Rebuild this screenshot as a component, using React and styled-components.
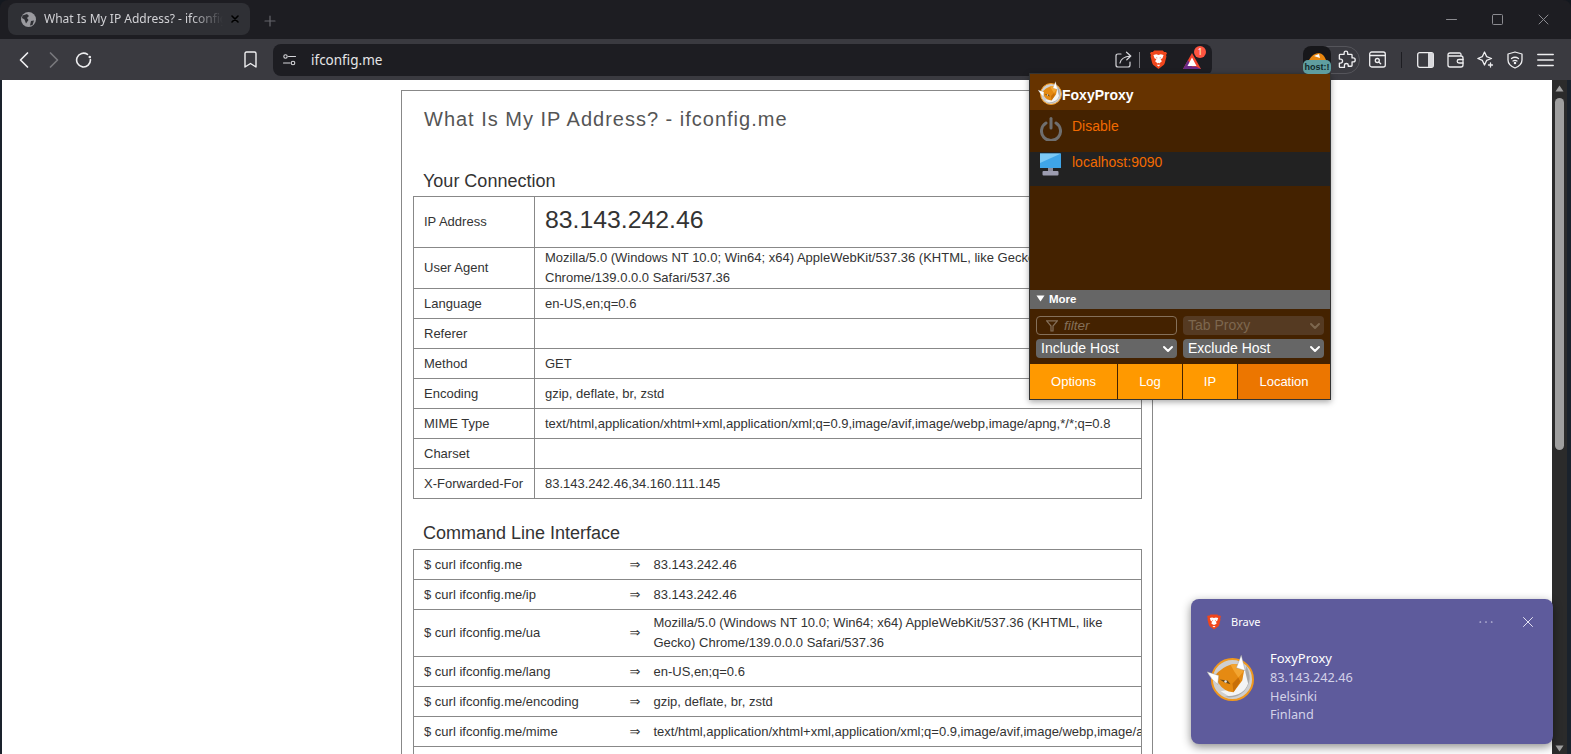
import React from "react";
import styled, { createGlobalStyle } from "styled-components";

const Global = createGlobalStyle`
  html, body { margin: 0; padding: 0; background: #14181f; overflow: hidden; }
  * { box-sizing: border-box; }
`;

const UI = `"Noto Sans", "Open Sans", sans-serif`;
const WEB = `"Liberation Sans", Arial, sans-serif`;

const Win = styled.div`
  position: relative;
  width: 1571px;
  height: 754px;
  overflow: hidden;
  display: flex;
  flex-direction: column;
  background: #14181f;
`;

/* ---------- tab strip ---------- */
const TabStrip = styled.div`
  height: 39px;
  flex: none;
  display: flex;
  align-items: flex-start;
  padding: 3px 0 0 8px;
  background: #1d1d22;
  border-radius: 8px 8px 0 0;
`;
const Tab = styled.div`
  width: 242px;
  height: 32px;
  display: flex;
  align-items: center;
  padding: 0 11px 0 13px;
  gap: 8px;
  background: #2f3035;
  border-radius: 8px;
`;
const TabTitle = styled.span`
  flex: 1;
  min-width: 0;
  font: 12px/16px ${UI};
  color: #d2d2d6;
  white-space: nowrap;
  overflow: hidden;
  -webkit-mask-image: linear-gradient(to right, #000 82%, transparent);
  mask-image: linear-gradient(to right, #000 82%, transparent);
`;
const NewTab = styled.div`
  width: 14px;
  height: 14px;
  margin: 12px 0 0 14px;
  color: #65656b;
  display: flex;
`;
const WinControls = styled.div`
  margin-left: auto;
  height: 32px;
  display: flex;
  align-items: center;
  color: #8b8b90;
  padding-right: 22px;
  gap: 35px;
`;

/* ---------- toolbar ---------- */
const Toolbar = styled.div`
  height: 41px;
  flex: none;
  display: flex;
  align-items: center;
  padding-left: 9px;
  background: #3a3a40;
`;
const NavBtn = styled.div`
  width: 30px;
  height: 30px;
  flex: none;
  display: flex;
  align-items: center;
  justify-content: center;
  color: ${(p) => (p.$dim ? "#77777c" : "#eeeef0")};
  margin-left: ${(p) => p.$ml || 0}px;
`;
const UrlBar = styled.div`
  width: 939px;
  height: 32px;
  margin-left: 8px;
  flex: none;
  display: flex;
  align-items: center;
  background: #1d1d22;
  border-radius: 8px;
  padding: 0 0 0 10px;
  color: #d6d6da;
`;
const UrlText = styled.span`
  font: 13.5px/18px ${UI};
  color: #e6e6e8;
  margin-left: 15px;
  flex: 1;
`;
const UrlDivider = styled.span`
  width: 1px;
  height: 16px;
  background: #77777c;
  margin: 0 10px 0 7px;
`;
const BatWrap = styled.span`
  position: relative;
  width: 18px;
  height: 16px;
  display: flex;
  margin: 3px 11px 0 16px;
`;
const CountBadge = styled.span`
  position: absolute;
  right: -5px;
  top: -7px;
  width: 12px;
  height: 12px;
  border-radius: 50%;
  background: #ff5540;
  color: #fff;
  font: 8px/12px ${UI};
  text-align: center;
`;
const ExtPill = styled.div`
  position: relative;
  width: 57px;
  height: 28px;
  margin-left: 91px;
  flex: none;
  border: 1px solid #55555b;
  border-radius: 14px;
  display: flex;
  align-items: center;
  justify-content: flex-end;
  padding-right: 3px;
  color: #eeeef0;
`;
const ExtAvatar = styled.div`
  position: absolute;
  left: -1px;
  top: -1px;
  width: 28px;
  height: 28px;
  background: #17171a;
  border-radius: 8px;
  overflow: hidden;
  display: flex;
  justify-content: center;
  padding-top: 6px;
`;
const HostBadge = styled.span`
  position: absolute;
  left: -1px;
  top: 13px;
  width: 28px;
  height: 14px;
  background: #5f9ea0;
  color: #10282a;
  border-radius: 5px;
  font: 9px/14px ${WEB};
  font-weight: 700;
  text-align: center;
  z-index: 2;
`;
const ToolIcons = styled.div`
  display: flex;
  align-items: center;
  margin-left: 2px;
  color: #eeeef0;
`;
const ToolSlot = styled.div`
  width: 30px;
  height: 30px;
  display: flex;
  align-items: center;
  justify-content: center;
`;
const ToolDivider = styled.span`
  width: 1px;
  height: 16px;
  background: #1d1d22;
  margin: 0 8px 0 9px;
`;

/* ---------- page ---------- */
const PageRow = styled.div`
  flex: 1;
  min-height: 0;
  display: flex;
  background: #1a222c;
  padding-left: 2px;
`;
const Page = styled.main`
  flex: 1;
  min-width: 0;
  background: #fff;
  overflow: hidden;
  padding: 10px 0 0 399px;
  font: 13px/20px ${WEB};
  color: #333;
`;
const Sheet = styled.div`
  width: 752px;
  height: 800px;
  border: 1px solid #888;
  padding: 14px 11px 0;
`;
const Title = styled.h1`
  margin: 0 0 36px 11px;
  font: 400 20px/28px ${WEB};
  letter-spacing: 1px;
  color: #555;
`;
const Heading = styled.h2`
  margin: ${(p) => p.$top}px 0 ${(p) => p.$bottom}px 10px;
  font: 400 18px/24px ${WEB};
  color: #333;
`;
const Table = styled.table`
  width: 728px;
  table-layout: fixed;
  border-collapse: collapse;
  border: 1px solid #888;
`;
const Col = styled.col`
  width: ${(p) => p.$w}px;
`;
const Row = styled.tr`
  height: ${(p) => p.$h || 30}px;
`;
const Cell = styled.td`
  padding: 0 10px;
  border-top: 1px solid #888;
  border-bottom: 1px solid #888;
  border-left: ${(p) => (p.$grid ? "1px solid #888" : "0")};
  border-right: ${(p) => (p.$grid ? "1px solid #888" : "0")};
  white-space: ${(p) => (p.$nowrap ? "nowrap" : "normal")};
  overflow: hidden;
`;
const CliArrow = styled.td`
  padding: 0 0 0 11px;
  border-top: 1px solid #888;
  border-bottom: 1px solid #888;
  font-family: "DejaVu Sans", sans-serif;
  font-size: 13px;
`;
const BigIp = styled.span`
  font-size: 24.8px;
  line-height: 30px;
  position: relative;
  top: -2px;
`;

/* ---------- scrollbar ---------- */
const ScrollBar = styled.div`
  width: 15px;
  flex: none;
  margin-right: 4px;
  background: #2b2b2b;
  display: flex;
  flex-direction: column;
  align-items: center;
  padding-top: 5px;
  color: #9f9f9f;
`;
const ScrollThumb = styled.div`
  width: 9px;
  height: 352px;
  margin-top: 6px;
  background: #9f9f9f;
  border-radius: 5px;
`;
const ScrollArrowBottom = styled.div`
  margin-top: auto;
  margin-bottom: 2px;
  display: flex;
`;

/* ---------- FoxyProxy popup ---------- */
const Popup = styled.section`
  position: absolute;
  left: 1029px;
  top: 73px;
  width: 302px;
  height: 327px;
  background: #442200;
  border: 1px solid #333;
  box-shadow: 0 2px 6px rgba(0, 0, 0, 0.35);
  display: flex;
  flex-direction: column;
  font: 14px/18px ${WEB};
`;
const PopupHeader = styled.header`
  height: 36px;
  flex: none;
  background: #663300;
  display: flex;
  align-items: flex-start;
  padding: 7px 0 0 8px;
  gap: 0;
  color: #fff;
  font: bold 14px/18px ${WEB};
`;
const HeaderText = styled.span`
  margin-top: 5px;
`;
const ProxyRow = styled.div`
  height: ${(p) => p.$h}px;
  flex: none;
  display: flex;
  align-items: flex-start;
  padding: ${(p) => p.$pad}px 0 0 10px;
  gap: 10px;
  background: ${(p) => (p.$selected ? "#222" : "transparent")};
  color: #f26a00;
`;
const ProxyIcon = styled.span`
  width: 22px;
  height: 24px;
  display: flex;
  flex: none;
`;
const ProxyLabel = styled.span`
  margin-top: ${(p) => p.$mt || 0}px;
`;
const Spacer = styled.div`
  flex: 1;
`;
const MoreBar = styled.div`
  height: 19px;
  flex: none;
  background: #666;
  color: #fff;
  display: flex;
  align-items: center;
  gap: 4px;
  padding: 0 0 2px 6px;
  font: bold 11.5px/14px ${WEB};
`;
const Controls = styled.div`
  display: grid;
  grid-template-columns: 141px 141px;
  column-gap: 6px;
  row-gap: 4px;
  padding: 7px 6px 6px;
`;
const FilterBox = styled.div`
  height: 19px;
  border: 1px solid #85705a;
  border-radius: 4px;
  display: flex;
  align-items: center;
  padding-left: 9px;
  gap: 6px;
  color: #85705a;
  font: italic 13.5px/17px ${WEB};
`;
const Dropdown = styled.div`
  height: 19px;
  border-radius: 4px;
  background: ${(p) => (p.$disabled ? "#553a22" : "#666")};
  color: ${(p) => (p.$disabled ? "#7d674f" : "#fff")};
  display: flex;
  align-items: center;
  justify-content: space-between;
  padding: 0 3px 0 5px;
  font: 14px/17px ${WEB};
`;
const ButtonRow = styled.div`
  height: 35px;
  flex: none;
  display: grid;
  grid-template-columns: 87px 64px 54px 1fr;
  column-gap: 1px;
  margin-top: auto;
`;
const ActionButton = styled.div`
  background: ${(p) => (p.$dark ? "#ec7600" : "#ff9900")};
  color: #fff;
  font: 13px/35px ${WEB};
  text-align: center;
`;

/* ---------- notification ---------- */
const Toast = styled.aside`
  position: absolute;
  left: 1191px;
  top: 599px;
  width: 362px;
  height: 145px;
  border-radius: 8px;
  background: #5e5b9c;
  box-shadow: 0 3px 10px rgba(0, 0, 0, 0.45);
  padding: 15px 20px 0 16px;
  font-family: ${UI};
`;
const ToastHead = styled.div`
  display: flex;
  align-items: center;
  height: 16px;
  color: #fff;
  font-size: 11px;
  line-height: 16px;
  gap: 10px;
`;
const ToastAction = styled.span`
  display: flex;
  color: #e4e3f2;
  margin-left: ${(p) => (p.$auto ? "auto" : "20px")};
`;
const ToastBody = styled.div`
  display: flex;
  margin-top: 23px;
  gap: 16px;
`;
const ToastIcon = styled.div`
  width: 47px;
  height: 47px;
  flex: none;
  display: flex;
  margin-top: 1px;
`;
const ToastLines = styled.div`
  margin-top: -4px;
  font-size: 12.7px;
  line-height: 18.8px;
  color: #d3d2e8;
`;
const ToastTitle = styled.div`
  color: #fff;
  font-size: 13px;
`;

/* ---------- drawings ---------- */
const Svg = ({ w, h = w, vb, children, sw = 1.5 }) => (
  <svg
    width={w}
    height={h}
    viewBox={vb || `0 0 ${w} ${h}`}
    fill="none"
    stroke="currentColor"
    strokeWidth={sw}
    strokeLinecap="round"
    strokeLinejoin="round"
  >
    {children}
  </svg>
);

const Fox = ({ size }) => (
  <svg width={size} height={size} viewBox="0 0 48 48">
    <circle cx="26" cy="26" r="21" fill="#cfcfcf" stroke="#f0981e" strokeWidth="2" />
    <path d="M40 12 Q48 26 38 38 Q30 46 18 44 Q34 40 38 28Z" fill="#a9a9a9" />
    <path d="M38 14 L42 30 Q38 42 22 43 L14 38 Q30 36 36 26Z" fill="#f4f4f4" />
    <path d="M8 22 Q16 13 24 11 Q30 9 35 12 L38 16 L36 27 L27 39 Q17 38 12 30Z" fill="#e58a12" />
    <path d="M24 11 Q30 9 35 12 L37 18 L32 24 L28 18Z" fill="#f3a531" />
    <path d="M13 26 L21 27 L24 31 L18 29Z" fill="#6a4a1a" />
    <path d="M27 39 L34 28 L32 24 L26 30Z" fill="#c86f08" />
    <path d="M30 14 L35 1 L39 17Z" fill="#fff" stroke="#888" strokeWidth=".4" />
    <path d="M0 18 L12 22 L11 31 Q5 27 0 18Z" fill="#fff" stroke="#888" strokeWidth=".4" />
    <circle cx="19" cy="28" r="1.3" fill="#e8e8e8" />
  </svg>
);

const Lion = ({ size }) => (
  <svg width={size} height={size * 1.14} viewBox="0 0 18 20.5">
    <path
      d="M4.5 0.5 H13.5 L15 2.2 L16.8 2 L18 3.4 L17 5.2 L17.4 7 L15.6 14 Q15 15.8 13.4 16.8 L9 20 L4.6 16.8 Q3 15.8 2.4 14 L0.6 7 L1 5.2 L0 3.4 L1.2 2 L3 2.2Z"
      fill="#f0461c"
    />
    <path
      d="M3.6 5.2 L6.6 4.4 L9 5.2 L11.4 4.4 L14.4 5.2 L13.2 8.8 L11.2 9.8 L12.6 11.8 L9.8 14.2 L9 13.6 L8.2 14.2 L5.4 11.8 L6.8 9.8 L4.8 8.8Z"
      fill="#fff"
    />
    <path d="M7 15.5 H11 L9 17.4Z" fill="#fff" />
    <path d="M6.5 7.5 L8 8.4 L7.2 9Z M11.5 7.5 L10 8.4 L10.8 9Z" fill="#f0461c" />
  </svg>
);

const Bat = () => (
  <svg width="18" height="16" viewBox="0 0 18 16">
    <path d="M9 0 L18 16 H0Z" fill="#f4442e" />
    <path d="M0 16 L5 7 L9 13.5 L13 13.5 L18 16Z" fill="#6a2a86" />
    <path d="M9 4.5 L13.5 13 H4.5Z" fill="#fff" />
  </svg>
);

const Globe = () => (
  <svg width="15" height="15" viewBox="0 0 15 15">
    <circle cx="7.5" cy="7.5" r="7.5" fill="#9a9a9f" />
    <path d="M1.5 3.5 L6 2 L8 4 L6 6 L7.5 8 L5 11.5 L3.5 7.5 L1 6Z M10 9 L13 8.5 L11.5 13 L9 13.5Z" fill="#2f3035" />
  </svg>
);

const Triangle = ({ down }) => (
  <svg width="9" height="7" viewBox="0 0 9 7">
    <path d={down ? "M0.5 0.5 H8.5 L4.5 6.5Z" : "M0.5 6.5 H8.5 L4.5 0.5Z"} fill="currentColor" />
  </svg>
);

const Chevron = () => (
  <Svg w={12} h={8} sw={2}>
    <path d="M2 2 L6 6 L10 2" />
  </Svg>
);

function CliRow({ cmd, val, h, nowrap }) {
  return (
    <Row $h={h}>
      <Cell>{cmd}</Cell>
      <CliArrow>⇒</CliArrow>
      <Cell $nowrap={nowrap}>{val}</Cell>
    </Row>
  );
}

const App = () => (
  <Win>
    <Global />
    <TabStrip>
      <Tab>
        <Globe />
        <TabTitle>What Is My IP Address? - ifconfig.me</TabTitle>
        <Svg w={8} sw={1.6}>
          <path d="M1 1 L7 7 M7 1 L1 7" />
        </Svg>
      </Tab>
      <NewTab>
        <Svg w={12} sw={1.2}>
          <path d="M6 1 V11 M1 6 H11" />
        </Svg>
      </NewTab>
      <WinControls>
        <Svg w={11} sw={1}>
          <path d="M0.5 5.5 H10.5" />
        </Svg>
        <Svg w={11} sw={1}>
          <rect x="0.5" y="0.5" width="10" height="10" rx="1" />
        </Svg>
        <Svg w={11} sw={1}>
          <path d="M1 1 L10 10 M10 1 L1 10" />
        </Svg>
      </WinControls>
    </TabStrip>

    <Toolbar>
      <NavBtn>
        <Svg w={12} h={18} sw={1.7}>
          <path d="M9.5 2 L2.5 9 L9.5 16" />
        </Svg>
      </NavBtn>
      <NavBtn $dim>
        <Svg w={12} h={18} sw={1.7}>
          <path d="M2.5 2 L9.5 9 L2.5 16" />
        </Svg>
      </NavBtn>
      <NavBtn>
        <Svg w={18} sw={1.6}>
          <path d="M15.4 8.5 A6.9 6.9 0 1 1 12.5 3.4" />
          <circle cx="14.8" cy="6" r="1.3" fill="currentColor" stroke="none" />
        </Svg>
      </NavBtn>
      <NavBtn $ml={136}>
        <Svg w={13} h={17} sw={1.4}>
          <path d="M1 2.5 Q1 1 2.5 1 H10.5 Q12 1 12 2.5 V16 L6.5 12.5 L1 16Z" />
        </Svg>
      </NavBtn>
      <UrlBar>
        <Svg w={13} h={12} sw={1.1}>
          <circle cx="2.5" cy="2.5" r="1.7" />
          <path d="M5.5 2.5 H12.5 M0.5 9 H7" />
          <circle cx="10" cy="9" r="1.8" />
        </Svg>
        <UrlText>ifconfig.me</UrlText>
        <Svg w={17} sw={1.2}>
          <path d="M6 3 H3 Q1 3 1 5 V14 Q1 16 3 16 H13 Q15 16 15 14 V11" />
          <path d="M5 12 Q6 6 15.5 5 M11.5 1.2 L15.8 5 L11.8 8.8" />
        </Svg>
        <UrlDivider />
        <Lion size={17} />
        <BatWrap>
          <Bat />
          <CountBadge>1</CountBadge>
        </BatWrap>
      </UrlBar>
      <ExtPill>
        <ExtAvatar>
          <svg width="20" height="8" viewBox="0 0 20 8">
            <path d="M2 8 Q6 1 12 1 Q17 2 19 8Z" fill="#e8860f" />
            <path d="M7 4 L12 2 L13 6Z" fill="#fff" />
          </svg>
        </ExtAvatar>
        <HostBadge>host:!</HostBadge>
        <Svg w={19} vb="0 0 24 24" sw={1.7}>
          <path d="M9 3.5 Q9 1.5 11.3 1.5 Q13.5 1.5 13.5 3.5 V5.5 H18 Q19 5.5 19 6.5 V10 H20.5 Q23 10 23 12.5 Q23 15 20.5 15 H19 V19.5 Q19 20.5 18 20.5 H14.2 V19 Q14.2 17 11.8 17 Q9.4 17 9.4 19 V22 H4 Q3 22 3 21 V16.5 H4.5 Q7 16.5 7 14 Q7 11.5 4.5 11.5 H3 V6.5 Q3 5.5 4 5.5 H9Z" />
        </Svg>
      </ExtPill>
      <ToolIcons>
        <ToolSlot>
          <Svg w={17} sw={1.3}>
            <rect x="0.7" y="1" width="15.6" height="15" rx="2" />
            <path d="M1 4.5 H16" />
            <circle cx="8.3" cy="9.5" r="2" />
            <path d="M10 11.2 L11.7 12.8" />
          </Svg>
        </ToolSlot>
        <ToolDivider />
        <ToolSlot>
          <svg width="17" height="16" viewBox="0 0 17 16">
            <rect x="0.7" y="0.7" width="15.6" height="14.6" rx="2" fill="none" stroke="currentColor" strokeWidth="1.3" />
            <path d="M11 1 H15 Q16 1 16 2 V14 Q16 15 15 15 H11Z" fill="#d8d8dc" />
          </svg>
        </ToolSlot>
        <ToolSlot>
          <Svg w={17} h={16} sw={1.3}>
            <path d="M14 4 V2.5 Q14 1 12.5 1 H3 Q1 1 1 3 V13 Q1 15 3 15 H14 Q16 15 16 13 V6 Q16 4 14 4 H2" />
            <path d="M16 7.5 H12 Q10.2 7.5 10.2 9.3 Q10.2 11 12 11 H16" />
          </Svg>
        </ToolSlot>
        <ToolSlot>
          <Svg w={17} sw={1.3}>
            <path d="M7.5 1 L9.6 5.6 L14.5 7.5 L9.6 9.4 L7.5 14 L5.4 9.4 L0.8 7.5 L5.4 5.6Z" />
            <path d="M13.5 12 V16 M11.5 14 H15.5" />
          </Svg>
        </ToolSlot>
        <ToolSlot>
          <Svg w={16} h={18} sw={1.3}>
            <path d="M8 1 L15 3 V9 Q15 14 8 17 Q1 14 1 9 V3Z" />
            <path d="M4.5 7.5 Q8 5 11.5 7.5 M6 10 Q8 8.6 10 10" />
            <circle cx="8" cy="12" r=".6" fill="currentColor" />
          </Svg>
        </ToolSlot>
        <ToolSlot>
          <Svg w={17} h={14} sw={1.5}>
            <path d="M0.8 1.5 H16.2 M0.8 7 H16.2 M0.8 12.5 H16.2" />
          </Svg>
        </ToolSlot>
      </ToolIcons>
    </Toolbar>

    <PageRow>
      <Page>
        <Sheet>
          <Title>What Is My IP Address? - ifconfig.me</Title>
          <Heading $top={0} $bottom={3}>Your Connection</Heading>
          <Table>
            <colgroup>
              <Col $w={121} />
              <Col $w={607} />
            </colgroup>
            <tbody>
              <Row $h={51}>
                <Cell $grid>IP Address</Cell>
                <Cell $grid><BigIp>83.143.242.46</BigIp></Cell>
              </Row>
              <Row $h={41}>
                <Cell $grid>User Agent</Cell>
                <Cell $grid>Mozilla/5.0 (Windows NT 10.0; Win64; x64) AppleWebKit/537.36 (KHTML, like Gecko) Chrome/139.0.0.0 Safari/537.36</Cell>
              </Row>
              <Row>
                <Cell $grid>Language</Cell>
                <Cell $grid>en-US,en;q=0.6</Cell>
              </Row>
              <Row>
                <Cell $grid>Referer</Cell>
                <Cell $grid />
              </Row>
              <Row>
                <Cell $grid>Method</Cell>
                <Cell $grid>GET</Cell>
              </Row>
              <Row>
                <Cell $grid>Encoding</Cell>
                <Cell $grid>gzip, deflate, br, zstd</Cell>
              </Row>
              <Row>
                <Cell $grid>MIME Type</Cell>
                <Cell $grid>text/html,application/xhtml+xml,application/xml;q=0.9,image/avif,image/webp,image/apng,*/*;q=0.8</Cell>
              </Row>
              <Row>
                <Cell $grid>Charset</Cell>
                <Cell $grid />
              </Row>
              <Row>
                <Cell $grid $nowrap>X-Forwarded-For</Cell>
                <Cell $grid>83.143.242.46,34.160.111.145</Cell>
              </Row>
            </tbody>
          </Table>

          <Heading $top={22} $bottom={4}>Command Line Interface</Heading>
          <Table>
            <colgroup>
              <Col $w={205} />
              <Col $w={25} />
              <Col $w={498} />
            </colgroup>
            <tbody>
              <CliRow cmd="$ curl ifconfig.me" val="83.143.242.46" />
              <CliRow cmd="$ curl ifconfig.me/ip" val="83.143.242.46" />
              <CliRow
                h={47}
                cmd="$ curl ifconfig.me/ua"
                val="Mozilla/5.0 (Windows NT 10.0; Win64; x64) AppleWebKit/537.36 (KHTML, like Gecko) Chrome/139.0.0.0 Safari/537.36"
              />
              <CliRow cmd="$ curl ifconfig.me/lang" val="en-US,en;q=0.6" />
              <CliRow cmd="$ curl ifconfig.me/encoding" val="gzip, deflate, br, zstd" />
              <CliRow
                nowrap
                cmd="$ curl ifconfig.me/mime"
                val="text/html,application/xhtml+xml,application/xml;q=0.9,image/avif,image/webp,image/apng,*/*;q=0.8"
              />
              <Row>
                <Cell />
                <Cell />
                <Cell />
              </Row>
            </tbody>
          </Table>
        </Sheet>
      </Page>
      <ScrollBar>
        <Triangle />
        <ScrollThumb />
        <ScrollArrowBottom>
          <Triangle down />
        </ScrollArrowBottom>
      </ScrollBar>
    </PageRow>

    <Popup>
      <PopupHeader>
        <Fox size={24} />
        <HeaderText>FoxyProxy</HeaderText>
      </PopupHeader>
      <ProxyRow $h={42} $pad={7}>
        <ProxyIcon>
          <svg width="22" height="24" viewBox="0 0 22 24" fill="none" stroke="#6f6f6f" strokeWidth="3" strokeLinecap="round">
            <path d="M11 1.5 V11" />
            <path d="M6 6 A9.5 9.5 0 1 0 16 6" />
          </svg>
        </ProxyIcon>
        <ProxyLabel>Disable</ProxyLabel>
      </ProxyRow>
      <ProxyRow $h={34} $selected $pad={1}>
        <ProxyIcon>
          <svg width="22" height="23" viewBox="0 0 22 23">
            <rect x="0" y="0.5" width="21" height="14.5" fill="#3fa5e8" />
            <path d="M0 .5 H21 L0 10Z" fill="#7cc9f5" />
            <rect x="8" y="15" width="5" height="3" fill="#8c8c9c" />
            <rect x="2.5" y="18" width="16" height="4.5" rx="1" fill="#9d9db0" />
          </svg>
        </ProxyIcon>
        <ProxyLabel>localhost:9090</ProxyLabel>
      </ProxyRow>
      <Spacer />
      <MoreBar>
        <svg width="9" height="7" viewBox="0 0 9 7">
          <path d="M0.5 0.5 H8.5 L4.5 6.5Z" fill="#fff" />
        </svg>
        More
      </MoreBar>
      <Controls>
        <FilterBox>
          <svg width="12" height="12" viewBox="0 0 12 12" fill="none" stroke="#85705a" strokeWidth="1.2">
            <path d="M.6 .8 H11.4 L7 6 V11 L5 11 V6Z" />
          </svg>
          filter
        </FilterBox>
        <Dropdown $disabled>
          Tab Proxy
          <Chevron />
        </Dropdown>
        <Dropdown>
          Include Host
          <Chevron />
        </Dropdown>
        <Dropdown>
          Exclude Host
          <Chevron />
        </Dropdown>
      </Controls>
      <ButtonRow>
        <ActionButton>Options</ActionButton>
        <ActionButton>Log</ActionButton>
        <ActionButton>IP</ActionButton>
        <ActionButton $dark>Location</ActionButton>
      </ButtonRow>
    </Popup>

    <Toast>
      <ToastHead>
        <Lion size={14} />
        <span>Brave</span>
        <ToastAction $auto>
          <Svg w={14} h={4} sw={1.2}>
            <path d="M1 2 H1.6 M6.7 2 H7.3 M12.4 2 H13" />
          </Svg>
        </ToastAction>
        <ToastAction>
          <Svg w={10} sw={1}>
            <path d="M.5 .5 L9.5 9.5 M9.5 .5 L.5 9.5" />
          </Svg>
        </ToastAction>
      </ToastHead>
      <ToastBody>
        <ToastIcon>
          <Fox size={47} />
        </ToastIcon>
        <ToastLines>
          <ToastTitle>FoxyProxy</ToastTitle>
          <div>83.143.242.46</div>
          <div>Helsinki</div>
          <div>Finland</div>
        </ToastLines>
      </ToastBody>
    </Toast>
  </Win>
);

export default App;
